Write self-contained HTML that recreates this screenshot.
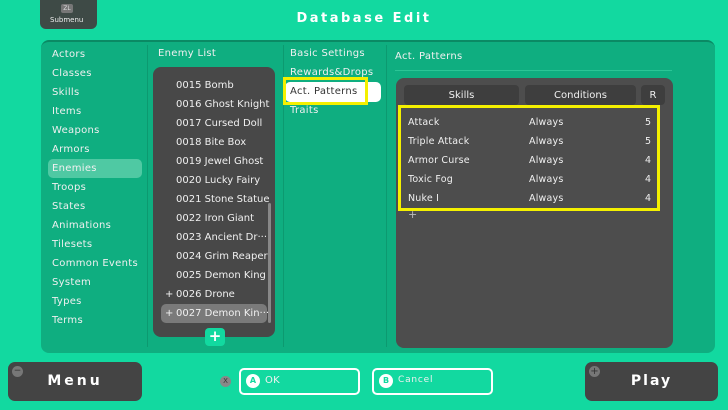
<!DOCTYPE html>
<html><head><meta charset="utf-8"><style>
*{margin:0;padding:0;box-sizing:border-box}
body{width:728px;height:410px;background:#12d9a0;font-family:"DejaVu Sans","Liberation Sans",sans-serif;position:relative;overflow:hidden;color:#f0f0f0}
.a{position:absolute;white-space:nowrap}
.t{font-size:10px;letter-spacing:.3px}
.dark{background:#484848}
</style></head><body>
<div class="a dark" style="left:40px;top:-6px;width:57px;height:35px;border-radius:6px;background:#3e4a46"></div>
<div class="a" style="left:61px;top:4px;width:12px;height:9px;background:#777;border-radius:2px;font-size:6px;color:#ddd;text-align:center;line-height:9px">ZL</div>
<div class="a" style="left:50px;top:16px;font-size:7px;color:#eee">Submenu</div>
<div class="a" style="left:0;width:728px;top:11px;text-align:center;font-size:13px;font-weight:bold;letter-spacing:2.5px;color:#fff">Database Edit</div>

<div class="a" style="left:41px;top:40px;width:674px;height:313px;background:#0fae80;border-radius:8px;border-top:2px solid #0a8a64"></div>
<div class="a" style="left:147px;top:45px;width:1px;height:302px;background:#0c9a70"></div>
<div class="a" style="left:283px;top:45px;width:1px;height:302px;background:#0c9a70"></div>
<div class="a" style="left:386px;top:45px;width:1px;height:302px;background:#0c9a70"></div>
<div class="a" style="left:48px;top:159px;width:94px;height:19px;background:#4fc9a3;border-radius:5px"></div>
<div class="a t" style="left:52px;top:45px;line-height:19px">Actors<br>Classes<br>Skills<br>Items<br>Weapons<br>Armors<br>Enemies<br>Troops<br>States<br>Animations<br>Tilesets<br>Common Events<br>System<br>Types<br>Terms</div>

<div class="a t" style="left:158px;top:48px">Enemy List</div>
<div class="a dark" style="left:153px;top:67px;width:122px;height:270px;border-radius:8px"></div>
<div class="a" style="left:161px;top:304px;width:106px;height:19px;background:#7a7a7a;border-radius:5px"></div>
<div class="a" style="left:268px;top:203px;width:3px;height:120px;background:#888;border-radius:2px"></div>
<div class="a" style="left:176px;top:76px;line-height:19px;font-size:10px;letter-spacing:0">0015 Bomb<br>0016 Ghost Knight<br>0017 Cursed Doll<br>0018 Bite Box<br>0019 Jewel Ghost<br>0020 Lucky Fairy<br>0021 Stone Statue<br>0022 Iron Giant<br>0023 Ancient Dr···<br>0024 Grim Reaper<br>0025 Demon King<br>0026 Drone<br>0027 Demon Kin···</div>
<div class="a t" style="left:165px;top:285px;line-height:19px">+<br>+</div>
<div class="a" style="left:205px;top:328px;width:20px;height:18px;background:#12d9a0;border-radius:4px;color:#fff;font-size:15px;font-weight:bold;text-align:center;line-height:17px">+</div>

<div class="a t" style="left:290px;top:48px">Basic Settings</div>
<div class="a t" style="left:290px;top:67px">Rewards&amp;Drops</div>
<div class="a" style="left:285px;top:82px;width:96px;height:20px;background:#fff;border-radius:5px"></div>
<div class="a" style="left:283px;top:77px;width:85px;height:28px;border:3px solid #f4f000"></div>
<div class="a t" style="left:290px;top:86px;color:#333">Act. Patterns</div>
<div class="a t" style="left:290px;top:105px">Traits</div>

<div class="a t" style="left:395px;top:51px">Act. Patterns</div>
<div class="a" style="left:395px;top:70px;width:277px;height:1px;background:#2bc596"></div>
<div class="a dark" style="left:396px;top:78px;width:277px;height:270px;border-radius:8px;background:#4d4d4d"></div>
<div class="a" style="left:404px;top:85px;width:115px;height:20px;background:#3e3e3e;border-radius:4px;text-align:center;font-size:10px;line-height:21px">Skills</div>
<div class="a" style="left:525px;top:85px;width:111px;height:20px;background:#3e3e3e;border-radius:4px;text-align:center;font-size:10px;line-height:21px">Conditions</div>
<div class="a" style="left:641px;top:85px;width:24px;height:20px;background:#3e3e3e;border-radius:4px;text-align:center;font-size:10px;line-height:21px">R</div>
<div class="a" style="left:398px;top:105px;width:262px;height:106px;border:3px solid #f4f000"></div>
<div class="a" style="left:408px;top:113px;font-size:9.5px;line-height:19px;letter-spacing:.2px">Attack<br>Triple Attack<br>Armor Curse<br>Toxic Fog<br>Nuke I</div>
<div class="a" style="left:529px;top:113px;font-size:9.5px;line-height:19px;letter-spacing:.2px">Always<br>Always<br>Always<br>Always<br>Always</div>
<div class="a" style="left:645px;top:113px;font-size:9.5px;line-height:19px">5<br>5<br>4<br>4<br>4</div>
<div class="a" style="left:408px;top:208px;font-size:11px;color:#bbb">+</div>

<div class="a" style="left:8px;top:362px;width:134px;height:39px;background:#444;border-radius:7px;text-align:center;line-height:39px;font-size:14px;font-weight:bold;letter-spacing:3px;color:#fff">Menu</div>
<div class="a" style="left:12px;top:366px;width:11px;height:11px;border-radius:50%;background:#777;color:#333;font-size:9px;line-height:10px;text-align:center">−</div>
<div class="a" style="left:585px;top:362px;width:133px;height:39px;background:#444;border-radius:7px;text-align:center;line-height:39px;font-size:14px;font-weight:bold;letter-spacing:2px;color:#fff">Play</div>
<div class="a" style="left:589px;top:366px;width:11px;height:11px;border-radius:50%;background:#777;color:#333;font-size:10px;line-height:11px;text-align:center">+</div>
<div class="a" style="left:220px;top:376px;width:11px;height:11px;border-radius:50%;background:#888;color:#333;font-size:7px;line-height:11px;text-align:center">X</div>
<div class="a" style="left:239px;top:368px;width:121px;height:27px;border:2px solid #fff;border-radius:5px"></div>
<div class="a" style="left:246px;top:374px;width:14px;height:14px;border-radius:50%;background:#fff;color:#12d9a0;font-size:8px;font-weight:bold;line-height:14px;text-align:center">A</div>
<div class="a t" style="left:265px;top:375px">OK</div>
<div class="a" style="left:372px;top:368px;width:121px;height:27px;border:2px solid #fff;border-radius:5px"></div>
<div class="a" style="left:379px;top:374px;width:14px;height:14px;border-radius:50%;background:#fff;color:#12d9a0;font-size:8px;font-weight:bold;line-height:14px;text-align:center">B</div>
<div class="a" style="left:398px;top:375px;font-size:9px;letter-spacing:.8px">Cancel</div>
</body></html>
